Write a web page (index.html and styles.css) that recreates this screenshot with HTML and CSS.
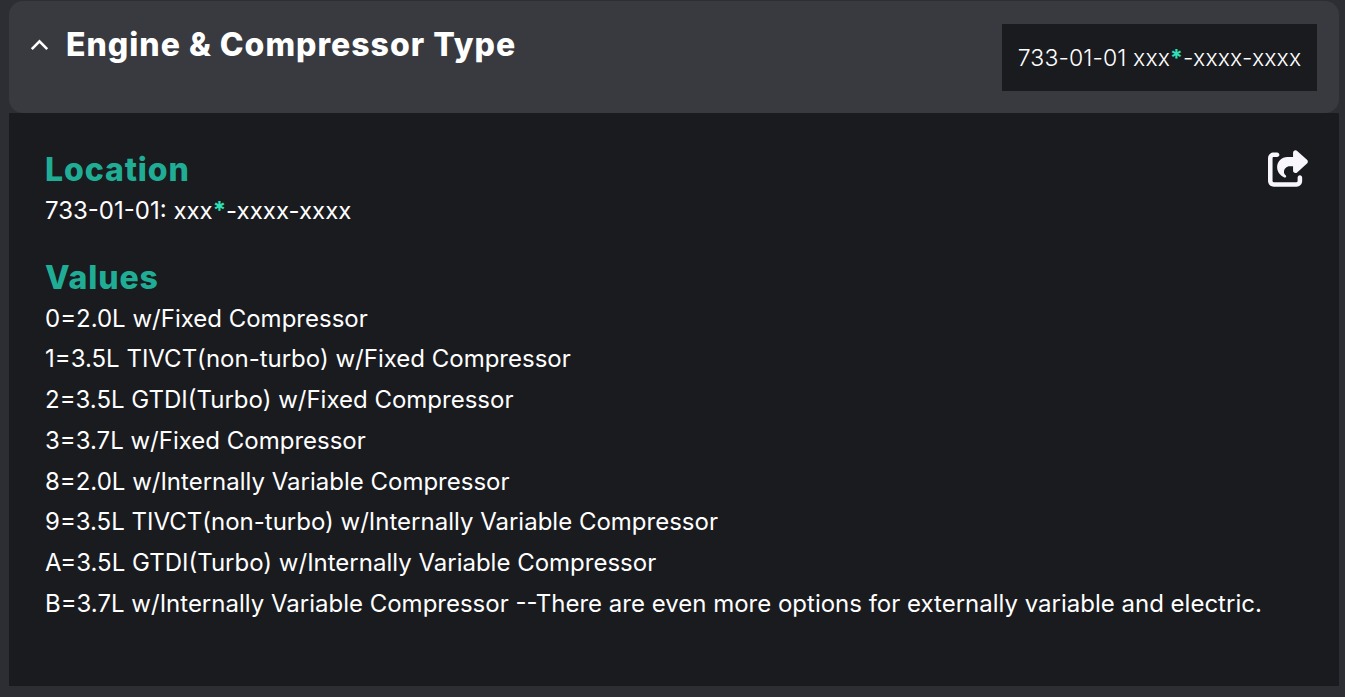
FILE: index.html
```html
<!DOCTYPE html>
<html lang="en">
<head>
<meta charset="utf-8">
<title>Engine &amp; Compressor Type</title>
<link rel="stylesheet" href="styles.css">
</head>
<body>
<section class="accordion">
  <header class="acc-head">
    <div class="acc-title">
      <svg class="chevron" viewBox="0 0 16 10"><path d="M1.5 8.5 8 2l6.5 6.5"/></svg>
      <h2>Engine &amp; Compressor Type</h2>
    </div>
    <div class="code-box">733-01-01 xxx<span class="star bold">*</span>-xxxx-xxxx</div>
  </header>
  <div class="acc-body">
    <div class="content">
      <h3 class="first">Location</h3>
      <p class="loc">733-01-01: xxx<span class="star bold">*</span>-xxxx-xxxx</p>
      <h3 class="values">Values</h3>
      <ul>
        <li>0=2.0L w/Fixed Compressor</li>
        <li>1=3.5L TIVCT(non-turbo) w/Fixed Compressor</li>
        <li>2=3.5L GTDI(Turbo) w/Fixed Compressor</li>
        <li>3=3.7L w/Fixed Compressor</li>
        <li>8=2.0L w/Internally Variable Compressor</li>
        <li>9=3.5L TIVCT(non-turbo) w/Internally Variable Compressor</li>
        <li>A=3.5L GTDI(Turbo) w/Internally Variable Compressor</li>
        <li>B=3.7L w/Internally Variable Compressor --There are even more options for externally variable and electric.</li>
      </ul>
    </div>
    <svg class="share" viewBox="0 0 576 512"><path d="M352 224H305.5c-45 0-81.5 36.5-81.5 81.5c0 22.3 10.3 34.3 19.2 40.5c6.8 4.7 12.8 12 12.8 20.3c0 9.8-8 17.8-17.8 17.8h-2.5c-2.4 0-4.8-.4-7.1-1.4C210.8 374.8 128 333.4 128 240c0-79.5 64.5-144 144-144h80V34.7C352 15.5 367.5 0 386.7 0c8.6 0 16.8 3.2 23.2 8.9L548.1 133.3c7.6 6.8 11.9 16.5 11.9 26.7s-4.3 19.9-11.9 26.7l-139 125.1c-5.9 5.3-13.5 8.2-21.4 8.2H384c-17.7 0-32-14.3-32-32V224zM80 96c-8.8 0-16 7.2-16 16V432c0 8.8 7.2 16 16 16H400c8.8 0 16-7.2 16-16V384c0-17.7 14.3-32 32-32s32 14.3 32 32v48c0 44.2-35.8 80-80 80H80c-44.2 0-80-35.8-80-80V112C0 67.8 35.8 32 80 32h48c17.7 0 32 14.3 32 32s-14.3 32-32 32H80z"/></svg>
  </div>
</section>
</body>
</html>
```

FILE: styles.css
```css
* { box-sizing: border-box; }
html, body { height: 100%; }
body {
  margin: 0;
  padding: 1px 6px 11px 9px;
  background: #2d2e33;
  color: #fff;
  font-family: Inter, "Liberation Sans", sans-serif;
  overflow: hidden;
}
.accordion { display: flex; flex-direction: column; height: 100%; }
.acc-head {
  height: 112px;
  flex: none;
  display: flex;
  justify-content: space-between;
  align-items: flex-start;
  background: #393a3f;
  border-radius: 14px;
  padding: 23px 22px 0 21px;
}
.acc-title { display: flex; align-items: center; gap: 17px; }
.chevron { width: 19px; height: 12px; fill: none; stroke: #fff; stroke-width: 2.2; }
h2 {
  margin: 0;
  font-family: Inter, sans-serif;
  font-size: 32px;
  line-height: 42px;
  font-weight: 800;
  letter-spacing: 1px;
}
.code-box {
  width: 315px;
  height: 67px;
  background: #1a1b1f;
  display: flex;
  align-items: center;
  justify-content: center;
  font-family: Inter, sans-serif;
  font-size: 23px;
  font-weight: 300;
  letter-spacing: 0.12px;
  white-space: pre;
}
.star { color: #2fe0b8; }
.bold { font-weight: 700; }
.acc-body {
  flex: 1;
  background: #1a1b1f;
  display: flex;
  justify-content: space-between;
  align-items: flex-start;
  padding: 37px 30px 0 36px;
}
h3 {
  margin: 0;
  color: #20ad95;
  font-size: 32px;
  line-height: 40px;
  font-weight: 800;
  letter-spacing: 0.9px;
}
.loc { margin: 0 0 27px; font-size: 24px; line-height: 41px; }
ul { list-style: none; margin: 0; padding: 0.7px 0 0; }
li { font-size: 24px; line-height: 40.7px; white-space: nowrap; }
.share { width: 41px; height: 37px; fill: #f8f5fc; }
```
